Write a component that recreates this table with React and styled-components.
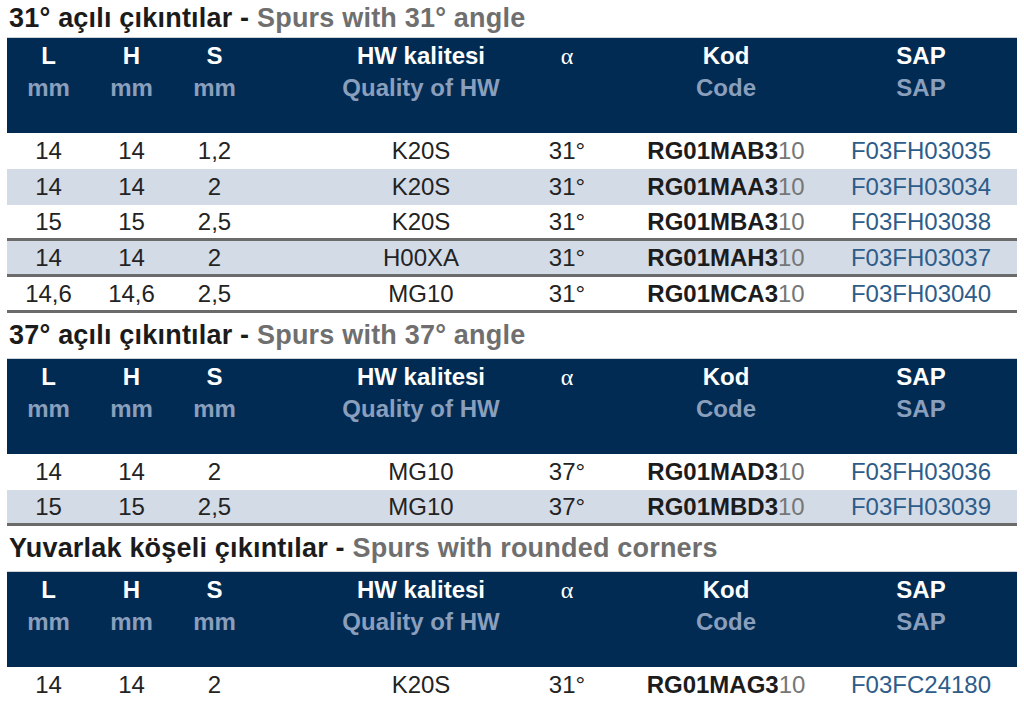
import React from 'react';
import styled, { createGlobalStyle } from 'styled-components';

const GlobalStyle = createGlobalStyle`
  html, body {
    margin: 0;
    padding: 0;
    background: #ffffff;
  }
  body {
    font-family: "Liberation Sans", Arial, sans-serif;
    overflow: hidden;
  }
`;

const COLUMNS = '83px 83px 83px 251px 120px 198px 1fr';

const Page = styled.div`
  width: 1024px;
  padding: 0 7px;
  box-sizing: border-box;
`;

const Section = styled.section`
  display: flex;
  flex-direction: column;
`;

const TitleBar = styled.h2`
  margin: 0;
  height: ${(p) => (p.$first ? 37 : 45)}px;
  line-height: ${(p) => (p.$first ? 37 : 45)}px;
  padding-left: 2px;
  font-size: 27px;
  font-weight: 700;
  letter-spacing: 0.2px;
  color: #1b1b1b;
  white-space: nowrap;
`;

const TitleSub = styled.span`
  color: #6f6f6f;
`;

const HeadRow = styled.div`
  display: grid;
  grid-template-columns: ${COLUMNS};
  height: 96px;
  box-sizing: border-box;
  padding-top: 2px;
  background: #022b54;
  border-top: 1px solid #cdd2d8;
  align-items: start;

  & > *:nth-child(4) {
    padding-left: 79px;
  }
`;

const HeadCell = styled.div`
  text-align: center;
  font-size: 24px;
  font-weight: 700;
  line-height: 32px;
  color: #ffffff;
`;

const HeadSub = styled.span`
  display: block;
  color: #8a9fbc;
`;

const Alpha = styled.span`
  font-family: "Liberation Serif", "Times New Roman", serif;
  font-weight: 400;
  font-size: 24px;
`;

const DataRow = styled.div`
  display: grid;
  grid-template-columns: ${COLUMNS};
  height: 36px;
  box-sizing: border-box;
  line-height: ${(p) => (p.$ruled ? 34 : 36)}px;
  background: ${(p) => (p.$striped ? '#d3dbe7' : '#ffffff')};
  border-bottom: ${(p) => (p.$ruled ? '3px solid #6b6b6b' : 'none')};
  font-size: 24px;

  & > *:nth-child(4) {
    padding-left: 79px;
  }
`;

const Cell = styled.div`
  text-align: center;
  color: #232323;
  white-space: nowrap;
`;

const CodeMain = styled.span`
  font-weight: 700;
  color: #1c1c1c;
`;

const CodeTail = styled.span`
  color: #767676;
`;

const SapCell = styled(Cell)`
  color: #2e5c89;
`;

const sections = [
  {
    title: '31° açılı çıkıntılar - ',
    sub: 'Spurs with 31° angle',
    rows: [
      ['14', '14', '1,2', 'K20S', '31°', 'RG01MAB3', 'F03FH03035'],
      ['14', '14', '2', 'K20S', '31°', 'RG01MAA3', 'F03FH03034'],
      ['15', '15', '2,5', 'K20S', '31°', 'RG01MBA3', 'F03FH03038', true],
      ['14', '14', '2', 'H00XA', '31°', 'RG01MAH3', 'F03FH03037', true],
      ['14,6', '14,6', '2,5', 'MG10', '31°', 'RG01MCA3', 'F03FH03040', true],
    ],
  },
  {
    title: '37° açılı çıkıntılar - ',
    sub: 'Spurs with 37° angle',
    rows: [
      ['14', '14', '2', 'MG10', '37°', 'RG01MAD3', 'F03FH03036'],
      ['15', '15', '2,5', 'MG10', '37°', 'RG01MBD3', 'F03FH03039', true],
    ],
  },
  {
    title: 'Yuvarlak köşeli çıkıntılar - ',
    sub: 'Spurs with rounded corners',
    rows: [['14', '14', '2', 'K20S', '31°', 'RG01MAG3', 'F03FC24180']],
  },
];

const TableHead = () => (
  <HeadRow>
    <HeadCell>L<HeadSub>mm</HeadSub></HeadCell>
    <HeadCell>H<HeadSub>mm</HeadSub></HeadCell>
    <HeadCell>S<HeadSub>mm</HeadSub></HeadCell>
    <HeadCell>HW kalitesi<HeadSub>Quality of HW</HeadSub></HeadCell>
    <HeadCell><Alpha>α</Alpha></HeadCell>
    <HeadCell>Kod<HeadSub>Code</HeadSub></HeadCell>
    <HeadCell>SAP<HeadSub>SAP</HeadSub></HeadCell>
  </HeadRow>
);

const App = () => (
  <>
    <GlobalStyle />
    <Page>
      {sections.map((section, si) => (
        <Section key={section.title}>
          <TitleBar $first={si === 0}>
            {section.title}
            <TitleSub>{section.sub}</TitleSub>
          </TitleBar>
          <TableHead />
          {section.rows.map(([l, h, s, hw, angle, code, sap, ruled], ri) => (
            <DataRow key={code} $striped={ri % 2 === 1} $ruled={ruled}>
              <Cell>{l}</Cell>
              <Cell>{h}</Cell>
              <Cell>{s}</Cell>
              <Cell>{hw}</Cell>
              <Cell>{angle}</Cell>
              <Cell>
                <CodeMain>{code}</CodeMain>
                <CodeTail>10</CodeTail>
              </Cell>
              <SapCell>{sap}</SapCell>
            </DataRow>
          ))}
        </Section>
      ))}
    </Page>
  </>
);

export default App;
